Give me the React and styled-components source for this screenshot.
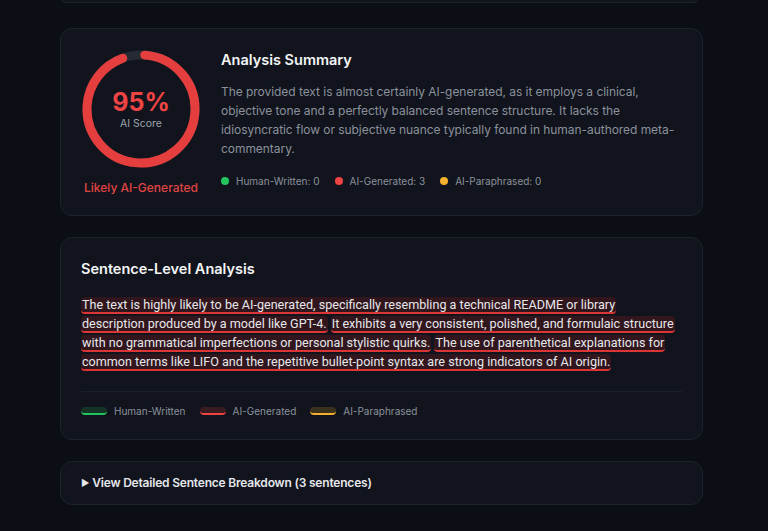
import styled, { createGlobalStyle } from "styled-components";

const Global = createGlobalStyle`
  html, body {
    margin: 0;
    padding: 0;
    background: #0b0e14;
    font-family: Inter, "Noto Sans", sans-serif;
    color: #e5e7eb;
  }
`;

const Page = styled.div`
  padding: 0 65px 30px 60px;
  display: flex;
  flex-direction: column;
  gap: 21px;
`;

const PrevCard = styled.div`
  height: 2px;
  margin: 0 6px 4px 2px;
  border: 1px solid #1d222c;
  border-top: 0;
  border-radius: 0 0 10px 10px;
  background: #11141b;
`;

const Card = styled.section`
  background: #11141c;
  border: 1px solid #1d222c;
  border-radius: 12px;
  padding: ${(p) => p.$pad || "20px"};
`;

const SummaryRow = styled.div`
  display: flex;
  gap: 20px;
`;

const ScoreCol = styled.div`
  width: 120px;
  display: flex;
  flex-direction: column;
  align-items: center;
  gap: 11px;
`;

const Ring = styled.div`
  position: relative;
  width: 120px;
  height: 120px;
`;

const RingText = styled.div`
  position: absolute;
  inset: 0;
  display: flex;
  flex-direction: column;
  align-items: center;
  justify-content: center;
`;

const Pct = styled.div`
  font-size: 25px;
  font-weight: 700;
  color: #ef4444;
  line-height: 28px;
`;

const PctLabel = styled.div`
  font-size: 10.5px;
  color: #9ca3af;
  margin-top: 1px;
`;

const Verdict = styled.div`
  font-size: 12px;
  font-weight: 500;
  color: #e04545;
  white-space: nowrap;
`;

const TextCol = styled.div`
  flex: 1;
  display: flex;
  flex-direction: column;
`;

const Title = styled.h2`
  margin: 0;
  font-size: 14.5px;
  font-weight: 600;
  line-height: 22px;
  color: #f3f4f6;
`;

const Summary = styled.p`
  margin: 11px 0 0;
  font-size: 12px;
  letter-spacing: -0.05px;
  line-height: 19px;
  color: #8b919c;
`;

const Legend = styled.div`
  display: flex;
  align-items: center;
  gap: ${(p) => p.$gap || "14px"};
  margin-top: ${(p) => p.$top || "0"};
`;

const LegendItem = styled.div`
  display: flex;
  align-items: center;
  gap: 7px;
  font-size: 10px;
  line-height: 16px;
  color: #8b919c;
`;

const Dot = styled.span`
  width: 8px;
  height: 8px;
  border-radius: 50%;
  background: ${(p) => p.$c};
`;

const Swatch = styled.span`
  width: 26px;
  height: 8px;
  border-radius: 5px;
  background: ${(p) => p.$bg};
  border-bottom: 2px solid ${(p) => p.$c};
  box-sizing: border-box;
`;

const Sentences = styled.p`
  margin: 15px 7px 0 0;
  font-family: Roboto, Inter, sans-serif;
  font-size: 12.6px;
  line-height: 19px;
  color: #e5e7eb;
`;

const Mark = styled.span`
  background: rgba(220, 38, 38, 0.16);
  border-bottom: 2px solid #dc3535;
  border-radius: 4px;
  padding: 0 1px;
  box-decoration-break: clone;
  -webkit-box-decoration-break: clone;
`;

const Divider = styled.hr`
  border: 0;
  border-top: 1px solid #1a1f28;
  margin: 20px 0 11px;
`;

const Summary3 = styled.div`
  font-size: 12px;
  letter-spacing: -0.2px;
  font-weight: 600;
  line-height: 16px;
  color: #e5e7eb;
  display: flex;
  align-items: center;
  gap: 3px;
`;

const Tri = styled.span`
  font-size: 9px;
  color: #e5e7eb;
`;

function ScoreRing({ value }) {
  const r = 54;
  const c = 2 * Math.PI * r;
  const len = (value / 100) * c;
  return (
    <Ring>
      <svg width="120" height="120" viewBox="0 0 120 120">
        <circle cx="60" cy="60" r={r} fill="none" stroke="#262a33" strokeWidth="9" />
        <circle
          cx="60"
          cy="60"
          r={r}
          fill="none"
          stroke="#e53e3e"
          strokeWidth="9"
          strokeLinecap="round"
          strokeDasharray={`${len - 6} ${c}`}
          transform="rotate(-86 60 60)"
        />
      </svg>
      <RingText>
        <Pct>{value}%</Pct>
        <PctLabel>AI Score</PctLabel>
      </RingText>
    </Ring>
  );
}

export default function App() {
  return (
    <>
      <Global />
      <Page>
        <PrevCard />
        <Card>
          <SummaryRow>
            <ScoreCol>
              <ScoreRing value={95} />
              <Verdict>Likely AI-Generated</Verdict>
            </ScoreCol>
            <TextCol>
              <Title>Analysis Summary</Title>
              <Summary>
                The provided text is almost certainly AI-generated, as it employs a clinical,
                objective tone and a perfectly balanced sentence structure. It lacks the
                idiosyncratic flow or subjective nuance typically found in human-authored
                meta-commentary.
              </Summary>
              <Legend $top="15px" $gap="15px">
                <LegendItem><Dot $c="#22c55e" />Human-Written: 0</LegendItem>
                <LegendItem><Dot $c="#ef4444" />AI-Generated: 3</LegendItem>
                <LegendItem><Dot $c="#f5b02e" />AI-Paraphrased: 0</LegendItem>
              </Legend>
            </TextCol>
          </SummaryRow>
        </Card>

        <Card>
          <Title>Sentence-Level Analysis</Title>
          <Sentences>
            <Mark>
              The text is highly likely to be AI-generated, specifically resembling a technical
              README or library description produced by a model like GPT-4.
            </Mark>{" "}
            <Mark>
              It exhibits a very consistent, polished, and formulaic structure with no
              grammatical imperfections or personal stylistic quirks.
            </Mark>{" "}
            <Mark>
              The use of parenthetical explanations for common terms like LIFO and the
              repetitive bullet-point syntax are strong indicators of AI origin.
            </Mark>
          </Sentences>
          <Divider />
          <Legend $gap="14px">
            <LegendItem><Swatch $bg="rgba(34,197,94,0.18)" $c="#22c55e" />Human-Written</LegendItem>
            <LegendItem><Swatch $bg="rgba(239,68,68,0.18)" $c="#ef4444" />AI-Generated</LegendItem>
            <LegendItem><Swatch $bg="rgba(245,176,46,0.18)" $c="#f5b02e" />AI-Paraphrased</LegendItem>
          </Legend>
        </Card>

        <Card $pad="13px 20px">
          <Summary3>
            <Tri>▶</Tri>View Detailed Sentence Breakdown (3 sentences)
          </Summary3>
        </Card>
      </Page>
    </>
  );
}
